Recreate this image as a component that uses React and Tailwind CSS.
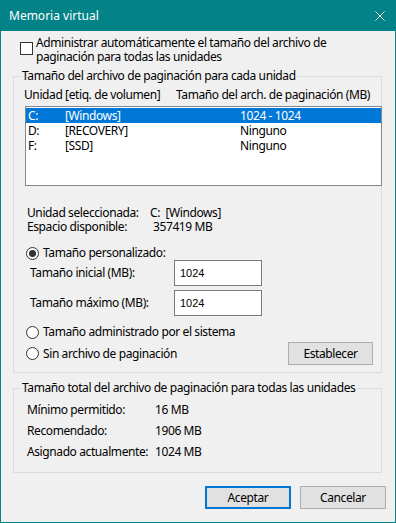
import React from "react";

const FONT = { fontFamily: '"Segoe UI", "Noto Sans", "Open Sans", sans-serif' };

function Radio({ checked }) {
  return (
    <span className="w-[13px] h-[13px] rounded-full border border-[#333333] bg-white flex items-center justify-center shrink-0">
      {checked && <span className="w-[7px] h-[7px] rounded-full bg-[#333333]" />}
    </span>
  );
}

function Btn({ children, def, className = "" }) {
  return (
    <div
      className={
        "h-[23px] w-[86px] flex items-center justify-center bg-[#e1e1e1] text-[12px] text-black " +
        (def ? "border-2 border-[#0078d7] " : "border border-[#adadad] ") +
        className
      }
    >
      {children}
    </div>
  );
}

export default function App() {
  const rows = [
    ["C:", "[Windows]", "1024 - 1024", true],
    ["D:", "[RECOVERY]", "Ninguno", false],
    ["F:", "[SSD]", "Ninguno", false],
  ];
  return (
    <div
      className="w-[396px] h-[523px] bg-[#038387] flex flex-col px-[1px] pb-[1px] text-[12px] text-black whitespace-nowrap tracking-[-0.4px]"
      style={FONT}
    >
      {/* Title bar */}
      <div className="h-[31px] flex items-center text-white shrink-0">
        <span className="ml-[8px] text-[12px] leading-[14px] tracking-normal">Memoria virtual</span>
        <svg className="ml-auto mr-[10px]" width="10" height="10" viewBox="0 0 10 10">
          <path d="M0.5 0.5 L9.5 9.5 M9.5 0.5 L0.5 9.5" stroke="white" strokeWidth="1" fill="none" />
        </svg>
      </div>

      {/* Body */}
      <div className="flex-1 bg-[#f0f0f0] flex flex-col">
        {/* checkbox */}
        <div className="pt-[5px] pl-[19px] flex items-start">
          <span className="mt-[6px] w-[13px] h-[13px] border border-[#333333] bg-white shrink-0" />
          <span className="ml-[3px] leading-[14px]">
            Administrar automáticamente el tamaño del archivo de
            <br />
            paginación para todas las unidades
          </span>
        </div>

        {/* Group 1 */}
        <div className="relative mt-[12px] ml-[12px] w-[369px] h-[297px] border border-[#dcdcdc] flex flex-col">
          <span className="absolute left-[7px] -top-[8px] px-[1px] leading-[14px] bg-[#f0f0f0]">
            Tamaño del archivo de paginación para cada unidad
          </span>
          <div className="pt-[11px] pl-[10px] flex leading-[14px]">
            <span className="w-[152px]">Unidad [etiq. de volumen]</span>
            <span>Tamaño del arch. de paginación (MB)</span>
          </div>
          <div className="mt-[4px] ml-[11px] w-[357px] h-[80px] border border-[#828790] bg-white pt-[1px] flex flex-col">
            {rows.map(([a, b, c, sel]) => (
              <div
                key={a}
                className={
                  "h-[15px] leading-[15px] flex pl-[2px] " +
                  (sel ? "bg-[#0078d7] text-white" : "text-black")
                }
              >
                <span className="w-[37px]">{a}</span>
                <span className="w-[175px]">{b}</span>
                <span>{c}</span>
              </div>
            ))}
          </div>

          <div className="mt-[20px] pl-[13px] flex leading-[14px]">
            <span className="w-[123px]">Unidad seleccionada:</span>
            <span>C:&nbsp; [Windows]</span>
          </div>
          <div className="pl-[13px] flex leading-[14px]">
            <span className="w-[126px]">Espacio disponible:</span>
            <span>357419 MB</span>
          </div>

          <div className="mt-[12px] pl-[12px] flex items-center h-[14px]">
            <Radio checked />
            <span className="ml-[4px] leading-[14px]">Tamaño personalizado:</span>
          </div>
          <div className="pl-[16px] flex items-center h-[26px]">
            <span className="w-[144px]">Tamaño inicial (MB):</span>
            <div
              className="w-[88px] h-[26px] border border-[#7a7a7a] bg-white flex items-center pl-[5px] text-[11px] tracking-normal"
              style={{ fontFamily: '"Liberation Sans", Arial, sans-serif' }}
            >
              1024
            </div>
          </div>
          <div className="mt-[4px] pl-[16px] flex items-center h-[26px]">
            <span className="w-[144px]">Tamaño máximo (MB):</span>
            <div
              className="w-[88px] h-[26px] border border-[#7a7a7a] bg-white flex items-center pl-[5px] text-[11px] tracking-normal"
              style={{ fontFamily: '"Liberation Sans", Arial, sans-serif' }}
            >
              1024
            </div>
          </div>

          <div className="mt-[9px] pl-[12px] flex items-center h-[14px]">
            <Radio />
            <span className="ml-[4px] leading-[14px]">Tamaño administrado por el sistema</span>
          </div>
          <div className="mt-[3px] pl-[12px] flex items-center h-[23px]">
            <Radio />
            <span className="ml-[4px] leading-[14px]">Sin archivo de paginación</span>
            <Btn className="ml-auto mr-[8px] !w-[85px]">Establecer</Btn>
          </div>
        </div>

        {/* Group 2 */}
        <div className="relative mt-[15px] ml-[12px] w-[369px] h-[85px] border border-[#dcdcdc] flex flex-col pt-[10px]">
          <span className="absolute left-[7px] -top-[8px] px-[1px] leading-[14px] bg-[#f0f0f0]">
            Tamaño total del archivo de paginación para todas las unidades
          </span>
          {[
            ["Mínimo permitido:", "16 MB"],
            ["Recomendado:", "1906 MB"],
            ["Asignado actualmente:", "1024 MB"],
          ].map(([l, v]) => (
            <div key={l} className="h-[21px] leading-[21px] pl-[13px] flex">
              <span className="w-[128px]">{l}</span>
              <span>{v}</span>
            </div>
          ))}
        </div>

        {/* Buttons */}
        <div className="mt-[13px] flex justify-end pr-[9px] gap-[9px]">
          <Btn def>Aceptar</Btn>
          <Btn>Cancelar</Btn>
        </div>
      </div>
    </div>
  );
}
